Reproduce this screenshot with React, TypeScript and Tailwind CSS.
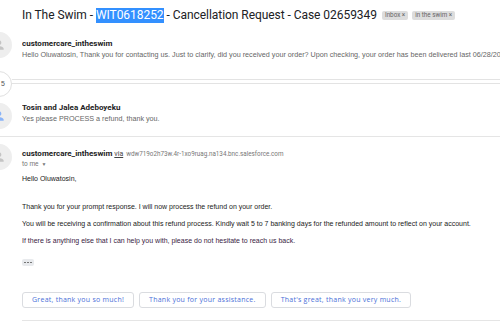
import React from "react";

const Person = ({ color }: { color: string }) => (
  <svg width="14" height="14" viewBox="0 0 24 24" fill={color}>
    <path d="M12 12c2.21 0 4-1.79 4-4s-1.79-4-4-4-4 1.79-4 4 1.79 4 4 4zm0 2c-2.67 0-8 1.34-8 4v2h16v-2c0-2.66-5.33-4-8-4z" />
  </svg>
);

const Avatar = ({ color }: { color: string }) => (
  <div className="-ml-[14px] w-[26px] h-[26px] shrink-0 rounded-full bg-[#eeeeee] flex items-center justify-center">
    <Person color={color} />
  </div>
);

export default function App() {
  const replies = [
    "Great, thank you so much!",
    "Thank you for your assistance.",
    "That's great, thank you very much.",
  ];
  return (
    <div className="w-[500px] h-[321px] overflow-hidden bg-white text-[#222] font-['Liberation_Sans',Arial,sans-serif]">
      {/* Title */}
      <div className="flex items-center pl-[22px] mt-[8px] h-[15px] whitespace-nowrap">
        <span className="font-['Roboto',sans-serif] text-[12px] tracking-[-0.05px] leading-[15px] text-[#202124]">
          In The Swim -{" "}
          <span className="inline-block h-[15px] leading-[15px] bg-[#3390ff] text-white">WIT0618252</span>{" "}
          - Cancellation Request - Case 02659349
        </span>
        <span className="ml-[5px] inline-flex h-[9px] items-center px-[3px] rounded-[2px] bg-[#dddddd] font-['Roboto',sans-serif] text-[6.3px] text-[#666]">
          Inbox ×
        </span>
        <span className="ml-[4px] inline-flex h-[9px] items-center px-[3px] rounded-[2px] bg-[#dddddd] font-['Roboto',sans-serif] text-[6.3px] text-[#666]">
          in the swim ×
        </span>
      </div>

      {/* Row 1 */}
      <div className="flex mt-[9px]">
        <Avatar color="#c4c4c4" />
        <div className="ml-[10px] min-w-0 flex-1 pt-[7px] whitespace-nowrap overflow-hidden">
          <div className="h-[10px] leading-[10px] font-['Roboto',sans-serif] text-[8px] font-bold text-[#222]">customercare_intheswim</div>
          <div className="mt-[1px] h-[10px] leading-[10px] text-[7.2px] text-[#666]">
            Hello Oluwatosin, Thank you for contacting us. Just to clarify, did you received your order? Upon checking, your order has been delivered last 06/28/2019
          </div>
        </div>
      </div>

      {/* Collapsed */}
      <div className="flex mt-[11px]">
        <div className="-ml-[14px] w-[26px] h-[26px] shrink-0 rounded-full border border-[#e0e0e0] bg-white flex items-center justify-end pr-[6px] text-[7px] text-[#555]">
          5
        </div>
        <div className="flex-1 self-start mt-[8px] h-[5px] border-y border-[#e3e3e3]" />
      </div>

      {/* Row 2 */}
      <div className="flex mt-[6px]">
        <Avatar color="#8ab4f8" />
        <div className="ml-[10px] min-w-0 flex-1 whitespace-nowrap overflow-hidden">
          <div className="h-[10px] leading-[10px] font-['Roboto',sans-serif] text-[8px] font-bold text-[#222]">Tosin and Jalea Adeboyeku</div>
          <div className="mt-[1px] h-[10px] leading-[10px] text-[7.2px] text-[#666]">Yes please PROCESS a refund, thank you.</div>
        </div>
      </div>

      <div className="mt-[7px] border-t border-[#e5e5e5]" />

      {/* Row 3 */}
      <div className="flex mt-[7px]">
        <div className="self-start">
          <Avatar color="#c4c4c4" />
        </div>
        <div className="ml-[10px] min-w-0 flex-1 pt-[5px] whitespace-nowrap">
          <div className="h-[10px] leading-[10px] flex items-baseline font-['Roboto',sans-serif]">
            <span className="text-[8px] font-bold text-[#222]">customercare_intheswim</span>
            <span className="ml-[2px] text-[7px] text-[#444] underline">via</span>
            <span className="ml-[3px] text-[6.3px] text-[#777]">wdw719o2h73w.4r-1xo9ruag.na134.bnc.salesforce.com</span>
          </div>
          <div className="h-[10px] leading-[10px] font-['Roboto',sans-serif] text-[6.5px] text-[#777] flex items-center">
            to me <span className="ml-[3px] text-[5px]">▼</span>
          </div>
          <div className="mt-[5px] h-[10px] leading-[10px] text-[7px]">Hello Oluwatosin,</div>
          <div className="mt-[18px] h-[10px] leading-[10px] text-[7px]">
            Thank you for your prompt response. I will now process the refund on your order.
          </div>
          <div className="mt-[7px] h-[10px] leading-[10px] text-[7px]">
            You will be receiving a confirmation about this refund process. Kindly wait 5 to 7 banking days for the refunded amount to reflect on your account.
          </div>
          <div className="mt-[7px] h-[10px] leading-[10px] text-[7px] text-[#3a2444]">
            If there is anything else that I can help you with, please do not hesitate to reach us back.
          </div>
          <div className="mt-[13px] w-[12px] h-[7px] rounded-[2px] bg-[#e8eaed] flex items-center justify-center gap-[1.5px]">
            <span className="w-[1.5px] h-[1.5px] rounded-full bg-[#666]" />
            <span className="w-[1.5px] h-[1.5px] rounded-full bg-[#666]" />
            <span className="w-[1.5px] h-[1.5px] rounded-full bg-[#666]" />
          </div>
          <div className="mt-[26px] flex gap-[5px]">
            {replies.map((r) => (
              <div
                key={r}
                className="h-[16px] px-[9px] flex items-center rounded-[3px] border border-[#dadce0] font-['Open_Sans',sans-serif] text-[7px] text-[#4a6fd8] tracking-[0.25px]"
              >
                {r}
              </div>
            ))}
          </div>
          <div className="mt-[12px] border-t border-[#e5e5e5]" />
        </div>
      </div>
    </div>
  );
}
